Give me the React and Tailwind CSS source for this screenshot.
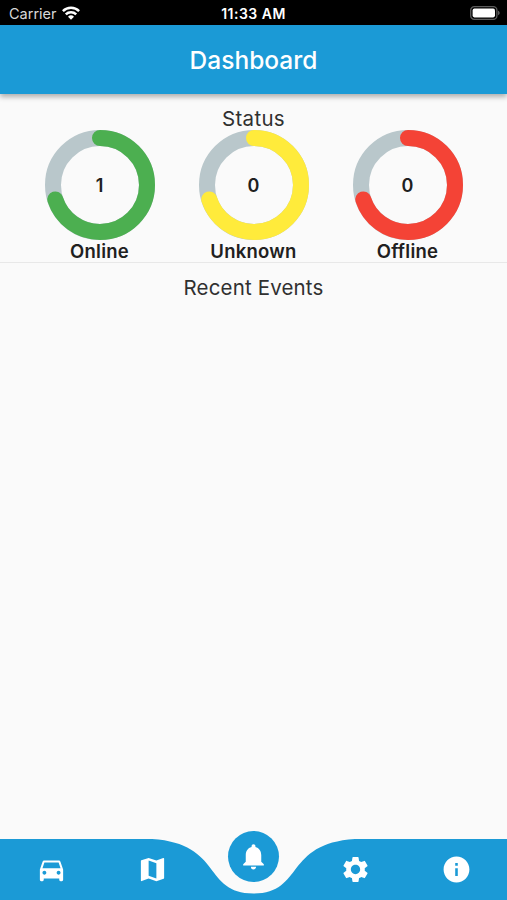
import React from 'react';
import { MdDirectionsCar, MdMap, MdNotifications, MdSettings, MdInfo } from 'react-icons/md';

const statuses = [
    { label: 'Online', count: 1, color: '#4caf50' },
    { label: 'Unknown', count: 0, color: '#ffeb3b' },
    { label: 'Offline', count: 0, color: '#f44336' },
];

const navItems = [
    { name: 'Devices', Icon: MdDirectionsCar },
    { name: 'Map', Icon: MdMap },
    { name: 'Dashboard', Icon: MdNotifications, active: true },
    { name: 'Settings', Icon: MdSettings },
    { name: 'About', Icon: MdInfo },
];

const WifiIcon = () => (
    <svg width="18" height="14" viewBox="0 0 18 14" fill="none" stroke="white" strokeWidth="2.5">
        <path d="M0.9 5.1a11.6 11.6 0 0 1 16.2 0" />
        <path d="M3.8 8.3a7.4 7.4 0 0 1 10.4 0" />
        <path d="M9 13.8L6 10.8a4.3 4.3 0 0 1 6 0z" fill="white" stroke="none" />
    </svg>
);

const BatteryIcon = () => (
    <svg width="30" height="14" viewBox="0 0 30 14">
        <rect x="0.7" y="0.7" width="26.2" height="12.6" rx="3.6" fill="none" stroke="#5c5c5c" strokeWidth="1.3" />
        <rect x="2.6" y="2.6" width="22.4" height="8.8" rx="1.8" fill="white" />
        <path d="M28 4.8c1.1.4 1.7 1.2 1.7 2.2s-.6 1.8-1.7 2.2z" fill="#5c5c5c" />
    </svg>
);

const StatusBar = () => (
    <div className="grid h-[25px] shrink-0 grid-cols-3 items-center bg-black pt-[2px] text-white">
        <div className="flex items-center gap-[5px] pl-[9px]">
            <span className="pt-px text-[14.5px] leading-none text-[#d8d8d8]">Carrier</span>
            <span className="pb-[2px]">
                <WifiIcon />
            </span>
        </div>
        <span className="text-center text-[14px] leading-none font-semibold tracking-[0.5px] whitespace-nowrap">11:33 AM</span>
        <div className="flex justify-end pr-[7px] pb-[2px]">
            <BatteryIcon />
        </div>
    </div>
);

const StatusRing = ({ label, count, color }) => (
    <div className="flex w-[110px] flex-col items-center">
        <div className="grid h-[110px] w-[110px] place-items-center">
            <svg className="col-start-1 row-start-1" width="110" height="110" viewBox="0 0 110 110" fill="none" strokeWidth="16">
                <circle cx="55" cy="55" r="47" stroke="#b9c7cb" />
                <circle
                    cx="55"
                    cy="55"
                    r="47"
                    stroke={color}
                    strokeLinecap="round"
                    pathLength="100"
                    strokeDasharray="70 100"
                    transform="rotate(-90 55 55)"
                />
            </svg>
            <span className="col-start-1 row-start-1 pt-[2px] text-[18px] leading-none font-semibold">{count}</span>
        </div>
        <span className="text-[18.5px] leading-[22px] font-semibold tracking-[0.25px] whitespace-nowrap">{label}</span>
    </div>
);

const BottomNav = () => (
    <nav className="relative h-[61px] shrink-0">
        {/* Bar with the notch under the active item */}
        <svg className="absolute inset-0" width="507" height="61" viewBox="0 0 507 61">
            <path d="M0 0H152.1C223.1 4.5 202.8 54.5 253.5 54.5C304.2 54.5 283.9 4.5 354.9 0H507V61H0Z" fill="#1b9ad6" />
        </svg>
        <div className="relative grid h-full grid-cols-5 pl-px">
            {navItems.map(({ name, Icon, active }) => (
                <button key={name} aria-label={name} className="flex items-center justify-center text-white">
                    {active ? (
                        <span className="relative -top-[13px] flex h-[51px] w-[51px] items-center justify-center rounded-full bg-[#1b9ad6]">
                            <Icon size={31} />
                        </span>
                    ) : (
                        <Icon size={31} />
                    )}
                </button>
            ))}
        </div>
    </nav>
);

const App = () => {
    return (
        <div className="flex h-[900px] w-[507px] flex-col overflow-hidden bg-[#fafafa] font-['Inter',sans-serif] text-[#202020]">
            <StatusBar />
            <header className="z-10 flex h-[69px] shrink-0 items-center justify-center bg-[#1b9ad6] pt-px shadow-[0_3px_5px_rgba(0,0,0,0.3)]">
                <h1 className="text-[24.5px] leading-none font-medium text-white">Dashboard</h1>
            </header>

            <main className="flex flex-1 flex-col">
                <section className="flex flex-col items-center border-b border-[#e8e8e8] pt-[13px]">
                    <h2 className="-mb-px text-[20.5px] leading-[24px] tracking-[0.3px] text-[#303030]">Status</h2>
                    <div className="flex gap-[44px]">
                        {statuses.map((status) => (
                            <StatusRing key={status.label} {...status} />
                        ))}
                    </div>
                </section>
                <section className="pt-[13px] text-center">
                    <h2 className="text-[20.5px] leading-[24px] tracking-[0.15px] text-[#303030]">Recent Events</h2>
                </section>
            </main>

            <BottomNav />
        </div>
    );
};

export default App;
